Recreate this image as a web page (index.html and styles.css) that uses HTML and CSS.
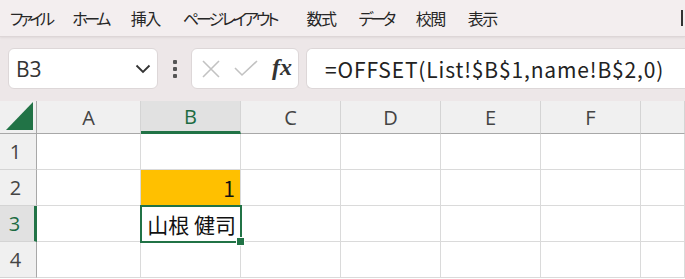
FILE: index.html
```html
<!DOCTYPE html>
<html lang="ja">
<head>
    <meta charset="UTF-8">
    <title>Excel</title>
    <link rel="stylesheet" href="styles.css">
</head>
<body>

    <!-- Ribbon tabs -->
    <div class="ribbon">
        <span class="tab kana">ファイル</span>
        <span class="tab kana">ホーム</span>
        <span class="tab">挿入</span>
        <span class="tab kana wide">ページ レイアウト</span>
        <span class="tab">数式</span>
        <span class="tab kana">データ</span>
        <span class="tab">校閲</span>
        <span class="tab">表示</span>
        <span class="tab-edge"></span>
    </div>

    <!-- Formula bar -->
    <div class="formula-bar">
        <div class="name-box">
            <span>B3</span>
            <svg class="chevron" width="16" height="10" viewBox="0 0 16 10">
                <path d="M1.5 1.5 L8 8 L14.5 1.5" fill="none" stroke="#333" stroke-width="1.8"/>
            </svg>
        </div>
        <div class="dots"><i></i><i></i><i></i></div>
        <div class="fx-box">
            <svg width="18" height="18" viewBox="0 0 18 18">
                <path d="M1 1 L17 17 M17 1 L1 17" stroke="#c2c2c2" stroke-width="1.6"/>
            </svg>
            <svg width="24" height="18" viewBox="0 0 24 18">
                <path d="M1 8 L8 15 L23 1" fill="none" stroke="#c2c2c2" stroke-width="1.6"/>
            </svg>
            <span class="fx">fx</span>
        </div>
        <div class="formula">=OFFSET(List!$B$1,name!B$2,0)</div>
    </div>

    <!-- Sheet -->
    <div class="sheet">
        <div class="corner"><div class="tri"></div></div>
        <div class="col-head">A</div>
        <div class="col-head active">B</div>
        <div class="col-head">C</div>
        <div class="col-head">D</div>
        <div class="col-head">E</div>
        <div class="col-head">F</div>
        <div class="col-head"></div>

        <div class="row-head">1</div>
        <div class="cell"></div><div class="cell"></div><div class="cell"></div>
        <div class="cell"></div><div class="cell"></div><div class="cell"></div><div class="cell"></div>

        <div class="row-head">2</div>
        <div class="cell"></div><div class="cell fill">1</div><div class="cell"></div>
        <div class="cell"></div><div class="cell"></div><div class="cell"></div><div class="cell"></div>

        <div class="row-head active">3</div>
        <div class="cell"></div><div class="cell selected">山根 健司</div><div class="cell"></div>
        <div class="cell"></div><div class="cell"></div><div class="cell"></div><div class="cell"></div>

        <div class="row-head">4</div>
        <div class="cell"></div><div class="cell"></div><div class="cell"></div>
        <div class="cell"></div><div class="cell"></div><div class="cell"></div><div class="cell"></div>
    </div>

</body>
</html>
```

FILE: styles.css
```css
/* General */
body {
    margin: 0;
    width: 685px;
    height: 279px;
    overflow: hidden;
    background: #ffffff;
    font-family: "Noto Sans CJK JP", "Noto Sans", sans-serif;
    color: #222;
}

/* Ribbon tabs */
.ribbon {
    height: 36px;
    background: #f3eeef;
    border-bottom: 1px solid #ddd6d7;
    box-shadow: 0 1px 2px rgba(0, 0, 0, 0.06);
    display: flex;
    align-items: center;
    padding-left: 10px;
    gap: 23px;
    white-space: nowrap;
    position: relative;
    z-index: 1;
    overflow: hidden;
}

.tab {
    font-size: 16px;
    color: #262626;
    letter-spacing: -1.5px;
    font-feature-settings: "palt";
}

.tab.kana {
    letter-spacing: -3.5px;
}

.tab.kana:first-child {
    margin-right: -2px;
}

.tab.wide {
    letter-spacing: -3px;
    margin-right: 7px;
}

.tab-edge {
    width: 2px;
    height: 16px;
    background: #333;
    margin-left: auto;
    margin-right: 2px;
}

/* Formula bar */
.formula-bar {
    height: 64px;
    background: #ede7e8;
    display: flex;
    align-items: flex-start;
    padding: 11px 0 0 8px;
    box-sizing: border-box;
}

.name-box,
.fx-box,
.formula {
    height: 41px;
    background: #fff;
    border: 1px solid #ddd7d8;
    border-radius: 6px;
    box-sizing: border-box;
    display: flex;
    align-items: center;
}

.name-box {
    width: 150px;
    padding: 0 6px 0 7px;
    justify-content: space-between;
    font-family: "Open Sans", sans-serif;
    font-size: 21px;
    color: #333;
}

.dots {
    width: 33px;
    height: 41px;
    display: flex;
    flex-direction: column;
    align-items: center;
    justify-content: center;
    gap: 3px;
}

.dots i {
    width: 4px;
    height: 4px;
    background: #555;
    border-radius: 1px;
}

.fx-box {
    width: 108px;
    padding: 0 6px 0 10px;
    gap: 14px;
}

.fx {
    font-family: "Liberation Serif", serif;
    font-style: italic;
    font-weight: bold;
    font-size: 24px;
    color: #333;
    margin-top: -3px;
}

.formula {
    flex: 1;
    margin-left: 7px;
    border-right: none;
    border-radius: 6px 0 0 6px;
    padding-left: 18px;
    font-size: 21px;
    letter-spacing: 0.85px;
    color: #222;
    white-space: nowrap;
}

/* Sheet grid */
.sheet {
    display: grid;
    grid-template-columns: 37px 104px repeat(5, 100px) 44px;
    grid-template-rows: 33px repeat(4, 36px);
}

.corner,
.col-head,
.row-head {
    background: #f0f0f0;
    color: #444;
    font-family: "Open Sans", sans-serif;
    font-size: 20px;
    display: flex;
    align-items: center;
    justify-content: center;
    box-sizing: border-box;
}

.corner {
    border-right: 1px solid #a8a8a8;
    border-bottom: 1px solid #a8a8a8;
    align-items: flex-end;
    justify-content: flex-end;
    padding: 0 3px 3px 0;
}

.tri {
    width: 27px;
    height: 28px;
    background: #217346;
    clip-path: polygon(100% 0, 100% 100%, 0 100%);
}

.col-head {
    border-right: 1px solid #d4d4d4;
    border-bottom: 1px solid #a8a8a8;
    padding-top: 1px;
}

.row-head {
    border-right: 1px solid #a8a8a8;
    border-bottom: 1px solid #d4d4d4;
    padding-right: 5px;
}

.col-head.active {
    background: #e1e1e1;
    color: #1c6b41;
    border-bottom: 3px solid #217346;
}

.row-head.active {
    background: #e1e1e1;
    color: #1c6b41;
    border-right: 3px solid #217346;
}

.cell {
    border-right: 1px solid #dadada;
    border-bottom: 1px solid #dadada;
    box-sizing: border-box;
    font-size: 21px;
    color: #111;
    display: flex;
    align-items: center;
    justify-content: flex-end;
    padding-right: 5px;
}

.cell.fill {
    background: #ffc000;
}

.cell.selected {
    position: relative;
    outline: 2px solid #217346;
    outline-offset: -1px;
    padding-right: 4px;
}

.cell.selected::after {
    content: "";
    position: absolute;
    right: -5px;
    bottom: -5px;
    width: 7px;
    height: 7px;
    background: #217346;
    border: 1px solid #fff;
}
```
